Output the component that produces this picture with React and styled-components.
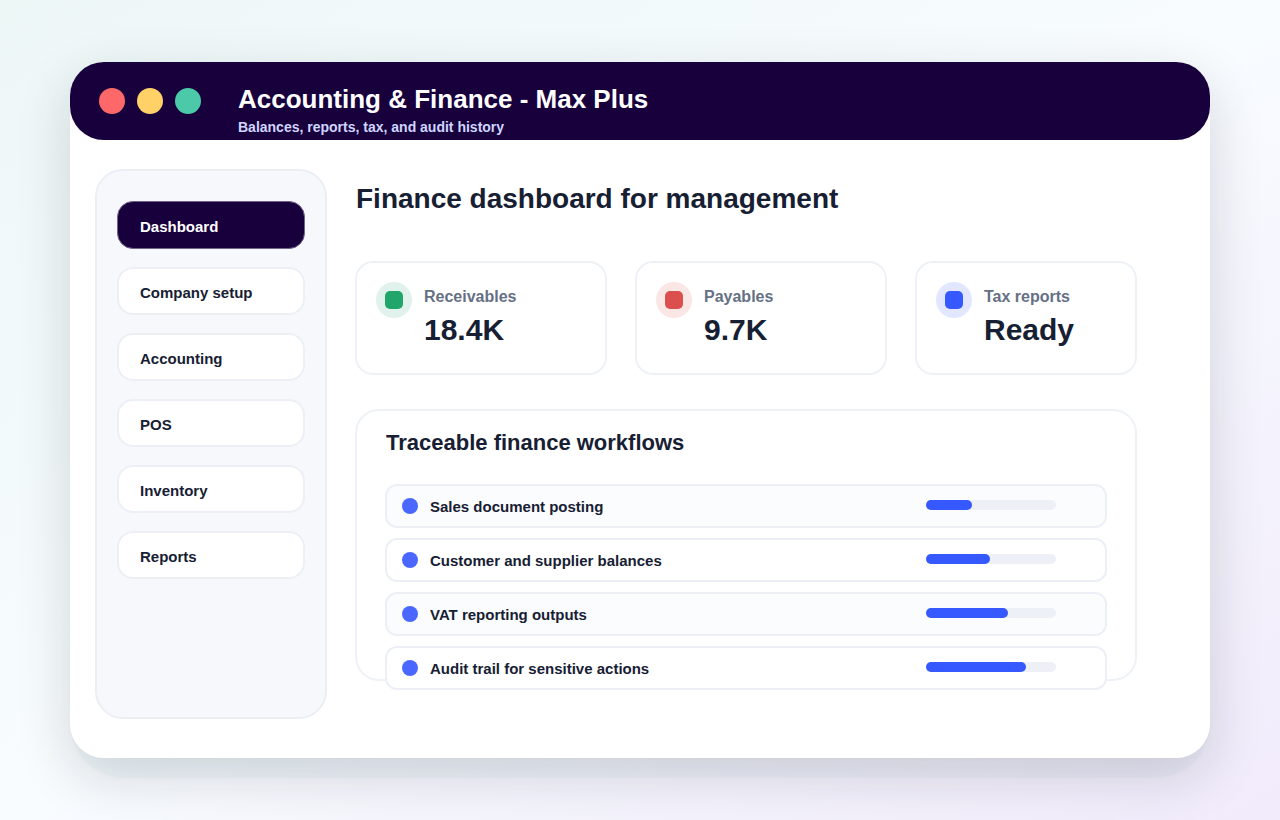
import React from 'react';
import styled, { createGlobalStyle } from 'styled-components';

const GlobalStyle = createGlobalStyle`
  * {
    box-sizing: border-box;
  }
  body {
    margin: 0;
    font-family: 'Liberation Sans', Arial, sans-serif;
    font-weight: 700;
    color: #172033;
  }
  h1, h2, h3, p, ul {
    margin: 0;
    padding: 0;
  }
`;

const Page = styled.div`
  min-height: 100vh;
  padding: 62px 70px;
  background: linear-gradient(to bottom right, #edf7f6 0%, #f8fcff 50%, #f1ebfb 100%);
`;

/* Tinted layer peeking out below the window */
const Stage = styled.div`
  position: relative;
  isolation: isolate;
  &::before {
    content: '';
    position: absolute;
    z-index: -1;
    inset: 20px 0 -20px;
    border-radius: 54px;
    background: rgba(0, 120, 130, 0.03);
  }
`;

const Window = styled.div`
  background: #ffffff;
  border-radius: 34px;
  box-shadow: 0 18px 54px rgba(20, 16, 32, 0.16);
`;

const TitleBar = styled.header`
  display: flex;
  height: 78px;
  padding: 0 29px;
  border-radius: 34px;
  background: #18003d;
`;

const Lights = styled.div`
  display: flex;
  gap: 12px;
  width: 139px;
  padding-top: 26px;
`;

const Light = styled.span`
  width: 26px;
  height: 26px;
  border-radius: 50%;
  background: ${({ $color }) => $color};
`;

const AppName = styled.h1`
  padding-top: 22px;
  font-size: 26px;
  line-height: 30px;
  color: #ffffff;
`;

const Tagline = styled.p`
  padding-top: 5px;
  font-size: 14px;
  line-height: 16px;
  color: #cfd6ff;
`;

const Body = styled.div`
  display: flex;
  gap: 28px;
  padding: 29px 73px 39px 25px;
`;

const Sidebar = styled.nav`
  flex: none;
  width: 232px;
  min-height: 550px;
  padding: 30px 20px;
  border: 2px solid #eaeff5;
  border-radius: 28px;
  background: #f7f8fc;
`;

const NavList = styled.ul`
  display: grid;
  gap: 18px;
  list-style: none;
`;

const NavButton = styled.button`
  width: 100%;
  height: 48px;
  padding: 2px ${({ $active }) => ($active ? '22px' : '21px')} 0;
  border: ${({ $active }) => ($active ? '1px solid #716389' : '2px solid #ecf0f6')};
  border-radius: 16px;
  background: ${({ $active }) => ($active ? '#18003d' : '#ffffff')};
  color: ${({ $active }) => ($active ? '#ffffff' : '#172033')};
  font: inherit;
  font-size: 15px;
  text-align: left;
  cursor: pointer;
`;

const Main = styled.main`
  flex: 1;
  min-width: 0;
`;

const PageTitle = styled.h2`
  padding-top: 14px;
  padding-left: 1px;
  font-size: 28px;
  line-height: 32px;
`;

const Stats = styled.div`
  display: grid;
  grid-template-columns: 252fr 252fr 222fr;
  gap: 28px;
  margin-top: 46px;
`;

const StatCard = styled.section`
  display: flex;
  gap: 12px;
  height: 114px;
  padding: 19px;
  border: 2px solid #eef2f7;
  border-radius: 18px;
  background: #ffffff;
`;

const StatIcon = styled.span`
  display: grid;
  place-items: center;
  width: 36px;
  height: 36px;
  border-radius: 50%;
  background: ${({ $tint }) => $tint};
`;

const StatMark = styled.span`
  width: 18px;
  height: 18px;
  border-radius: 5px;
  background: ${({ $color }) => $color};
`;

const StatLabel = styled.h3`
  padding-top: 6px;
  font-size: 16px;
  line-height: 18px;
  color: #667085;
`;

const StatValue = styled.p`
  padding-top: 7px;
  font-size: 30px;
  line-height: 34px;
`;

const Panel = styled.section`
  height: 272px;
  margin-top: 34px;
  padding: 19px 28px 0;
  border: 2px solid #eef2f7;
  border-radius: 24px;
  background: #ffffff;
`;

const PanelTitle = styled.h3`
  padding-left: 1px;
  font-size: 22px;
  line-height: 26px;
`;

const Workflows = styled.ul`
  display: grid;
  gap: 10px;
  margin-top: 28px;
  list-style: none;
`;

const Workflow = styled.li`
  display: flex;
  align-items: center;
  gap: 12px;
  height: 44px;
  padding: 0 49px 0 15px;
  border: 2px solid #ecf0f6;
  border-radius: 12px;
  background: #ffffff;
  font-size: 15px;
  &:nth-child(odd) {
    background: #fbfcfe;
  }
`;

const Dot = styled.span`
  width: 16px;
  height: 16px;
  border-radius: 50%;
  background: #4a68ff;
`;

const WorkflowName = styled.span`
  flex: 1;
`;

const Track = styled.div`
  width: 130px;
  height: 10px;
  margin-bottom: 2px;
  border-radius: 5px;
  background: #edf0f7;
`;

const Fill = styled.div`
  height: 100%;
  border-radius: 5px;
  background: #3558ff;
`;

const navItems = ['Dashboard', 'Company setup', 'Accounting', 'POS', 'Inventory', 'Reports'];

const stats = [
  { label: 'Receivables', value: '18.4K', color: '#21a56b', tint: '#e0f2eb' },
  { label: 'Payables', value: '9.7K', color: '#dc4f4f', tint: '#fbe6e6' },
  { label: 'Tax reports', value: 'Ready', color: '#3558ff', tint: '#e2e7ff' },
];

const workflows = [
  { name: 'Sales document posting', done: 46 },
  { name: 'Customer and supplier balances', done: 64 },
  { name: 'VAT reporting outputs', done: 82 },
  { name: 'Audit trail for sensitive actions', done: 100 },
];

const App = () => (
  <>
    <GlobalStyle />
    <Page>
      <Stage>
        <Window>
          <TitleBar>
            <Lights>
              <Light $color="#ff6868" />
              <Light $color="#ffd166" />
              <Light $color="#4bc9a8" />
            </Lights>
            <div>
              <AppName>Accounting &amp; Finance - Max Plus</AppName>
              <Tagline>Balances, reports, tax, and audit history</Tagline>
            </div>
          </TitleBar>
          <Body>
            <Sidebar>
              <NavList>
                {navItems.map((item, i) => (
                  <li key={item}>
                    <NavButton type="button" $active={i === 0}>{item}</NavButton>
                  </li>
                ))}
              </NavList>
            </Sidebar>
            <Main>
              <PageTitle>Finance dashboard for management</PageTitle>
              <Stats>
                {stats.map((stat) => (
                  <StatCard key={stat.label}>
                    <StatIcon $tint={stat.tint}>
                      <StatMark $color={stat.color} />
                    </StatIcon>
                    <div>
                      <StatLabel>{stat.label}</StatLabel>
                      <StatValue>{stat.value}</StatValue>
                    </div>
                  </StatCard>
                ))}
              </Stats>
              <Panel>
                <PanelTitle>Traceable finance workflows</PanelTitle>
                <Workflows>
                  {workflows.map((flow) => (
                    <Workflow key={flow.name}>
                      <Dot />
                      <WorkflowName>{flow.name}</WorkflowName>
                      <Track>
                        <Fill style={{ width: `${(flow.done / 130) * 100}%` }} />
                      </Track>
                    </Workflow>
                  ))}
                </Workflows>
              </Panel>
            </Main>
          </Body>
        </Window>
      </Stage>
    </Page>
  </>
);

export default App;
